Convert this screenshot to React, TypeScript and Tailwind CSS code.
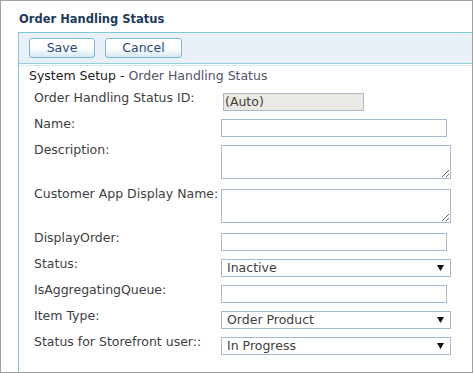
import React from 'react';

// --- Form definition ---

type Field =
  | { label: string; kind: 'auto' }
  | { label: string; kind: 'text' }
  | { label: string; kind: 'area' }
  | { label: string; kind: 'select'; value: string };

const FIELDS: Field[] = [
  { label: 'Order Handling Status ID:', kind: 'auto' },
  { label: 'Name:', kind: 'text' },
  { label: 'Description:', kind: 'area' },
  { label: 'Customer App Display Name:', kind: 'area' },
  { label: 'DisplayOrder:', kind: 'text' },
  { label: 'Status:', kind: 'select', value: 'Inactive' },
  { label: 'IsAggregatingQueue:', kind: 'text' },
  { label: 'Item Type:', kind: 'select', value: 'Order Product' },
  { label: 'Status for Storefront user::', kind: 'select', value: 'In Progress' },
];

const ToolButton = ({ label, width }: { label: string; width: string }) => (
  <button
    className={`${width} h-[20px] shrink-0 rounded-[3px] border border-[#7fb6d3] bg-gradient-to-b from-white via-white to-[#d6e7f2] text-[12.5px] leading-[18px] text-[#2a4c78]`}
  >
    {label}
  </button>
);

const FieldControl = ({ field }: { field: Field }) => {
  if (field.kind === 'auto') {
    return (
      <div className="mt-[3px] ml-[2px] h-[18px] w-[141px] shrink-0 border border-[#a7b9d1] bg-[#ebe9e3] pl-[1px] text-[12.5px] leading-[16px] text-[#404040]">
        (Auto)
      </div>
    );
  }
  if (field.kind === 'text') {
    return <input className="mt-[3px] block h-[18px] w-[226px] shrink-0 border border-[#a7b9d1] bg-white outline-none" />;
  }
  if (field.kind === 'area') {
    return <textarea className="mt-[3px] block h-[34px] w-[230px] shrink-0 border border-[#a7b9d1] bg-white outline-none" />;
  }
  return (
    <div className="mt-[3px] flex h-[18px] w-[230px] shrink-0 items-center justify-between border border-[#a7b9d1] bg-white pl-[5px] pr-[6px] text-[12.5px] text-[#404040]">
      <span className="leading-[16px]">{field.value}</span>
      <svg width="7" height="6" viewBox="0 0 7 6">
        <path d="M0 0 H7 L3.5 6 Z" fill="#111" />
      </svg>
    </div>
  );
};

export default function App() {
  return (
    <div
      className="flex h-[373px] w-[473px] flex-col overflow-hidden border border-[#a0a0a0] bg-white"
      style={{ fontFamily: '"DejaVu Sans", Verdana, sans-serif' }}
    >
      {/* Title */}
      <div className="h-[31px] shrink-0 pl-[18px] pt-[11px] text-[11.5px] font-bold leading-[15px] text-[#1e3a5c]">
        Order Handling Status
      </div>

      {/* Panel */}
      <div className="ml-[17px] flex flex-1 flex-col border-l border-t border-[#7ccad7]">
        {/* Toolbar */}
        <div className="flex h-[31px] shrink-0 items-start gap-[10px] border-b border-[#93d0dc] bg-[#e9f0f7] pl-[10px] pt-[5px]">
          <ToolButton label="Save" width="w-[66px]" />
          <ToolButton label="Cancel" width="w-[77px]" />
        </div>
        <div className="mt-[1px] h-[1px] shrink-0 bg-[#cdeaf0]" />

        {/* Breadcrumb */}
        <div className="mt-[2px] shrink-0 pl-[10px] text-[12.5px] leading-[15px] text-[#222]">
          System Setup - <span className="text-[#55506a]">Order Handling Status</span>
        </div>

        {/* Form rows */}
        <div className="mt-[7px] flex shrink-0 flex-col pl-[15px]">
          {FIELDS.map((f) => (
            <div key={f.label} className={`flex items-start ${f.kind === 'area' ? 'mb-[7px]' : 'mb-[5px]'}`}>
              <div className="w-[187px] shrink-0 text-[12.5px] leading-[15px] text-[#404040]">{f.label}</div>
              <FieldControl field={f} />
            </div>
          ))}
        </div>
      </div>
    </div>
  );
}
